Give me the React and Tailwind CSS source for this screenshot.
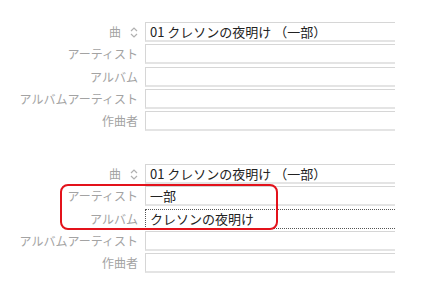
const SortIcon = () => (
  <svg width="8" height="11" viewBox="0 0 8 11" className="ml-[9px]">
    <path d="M1 4 L4 1 L7 4" fill="none" stroke="#b0b0b0" strokeWidth="1.2" />
    <path d="M1 7 L4 10 L7 7" fill="none" stroke="#b0b0b0" strokeWidth="1.2" />
  </svg>
);

const Row = ({ label, value, sort, focus }) => (
  <div className="flex items-center h-[20px]">
    <div className="w-[145px] pr-[7px] flex justify-end items-center text-[12px] text-[#a3a3a3]">
      <span>{label}</span>
      {sort && <SortIcon />}
    </div>
    <div
      className={
        focus
          ? "w-[250px] h-[20px] border-t border-b border-l border-dotted border-[#555] flex items-center pl-[4px] text-[13px] text-[#222]"
          : "w-[250px] h-[20px] border-t border-l border-[#d6d6d6] border-b-2 border-b-[#e4e4e4] flex items-center pl-[4px] text-[13px] text-[#222]"
      }
    >
      {value}
    </div>
  </div>
);

const Group = ({ rows }) => (
  <div className="flex flex-col gap-[2.25px]">
    {rows.map((r) => (
      <Row key={r.label} {...r} />
    ))}
  </div>
);

export default function App() {
  const first = [
    { label: "曲", value: "01 クレソンの夜明け （一部）", sort: true },
    { label: "アーティスト", value: "" },
    { label: "アルバム", value: "" },
    { label: "アルバムアーティスト", value: "" },
    { label: "作曲者", value: "" },
  ];
  const second = [
    { label: "曲", value: "01 クレソンの夜明け （一部）", sort: true },
    { label: "アーティスト", value: "一部" },
    { label: "アルバム", value: "クレソンの夜明け", focus: true },
    { label: "アルバムアーティスト", value: "" },
    { label: "作曲者", value: "" },
  ];
  return (
    <div
      className="relative w-[422px] h-[291px] bg-white overflow-hidden pt-[22px]"
      style={{ fontFamily: '"Noto Sans CJK JP", "Noto Sans", sans-serif' }}
    >
      <Group rows={first} />
      <div className="h-[33px]" />
      <Group rows={second} />
      <div className="absolute left-[60px] top-[184px] w-[218px] h-[46px] border-2 border-[#e3121b] rounded-[8px]" />
    </div>
  );
}
